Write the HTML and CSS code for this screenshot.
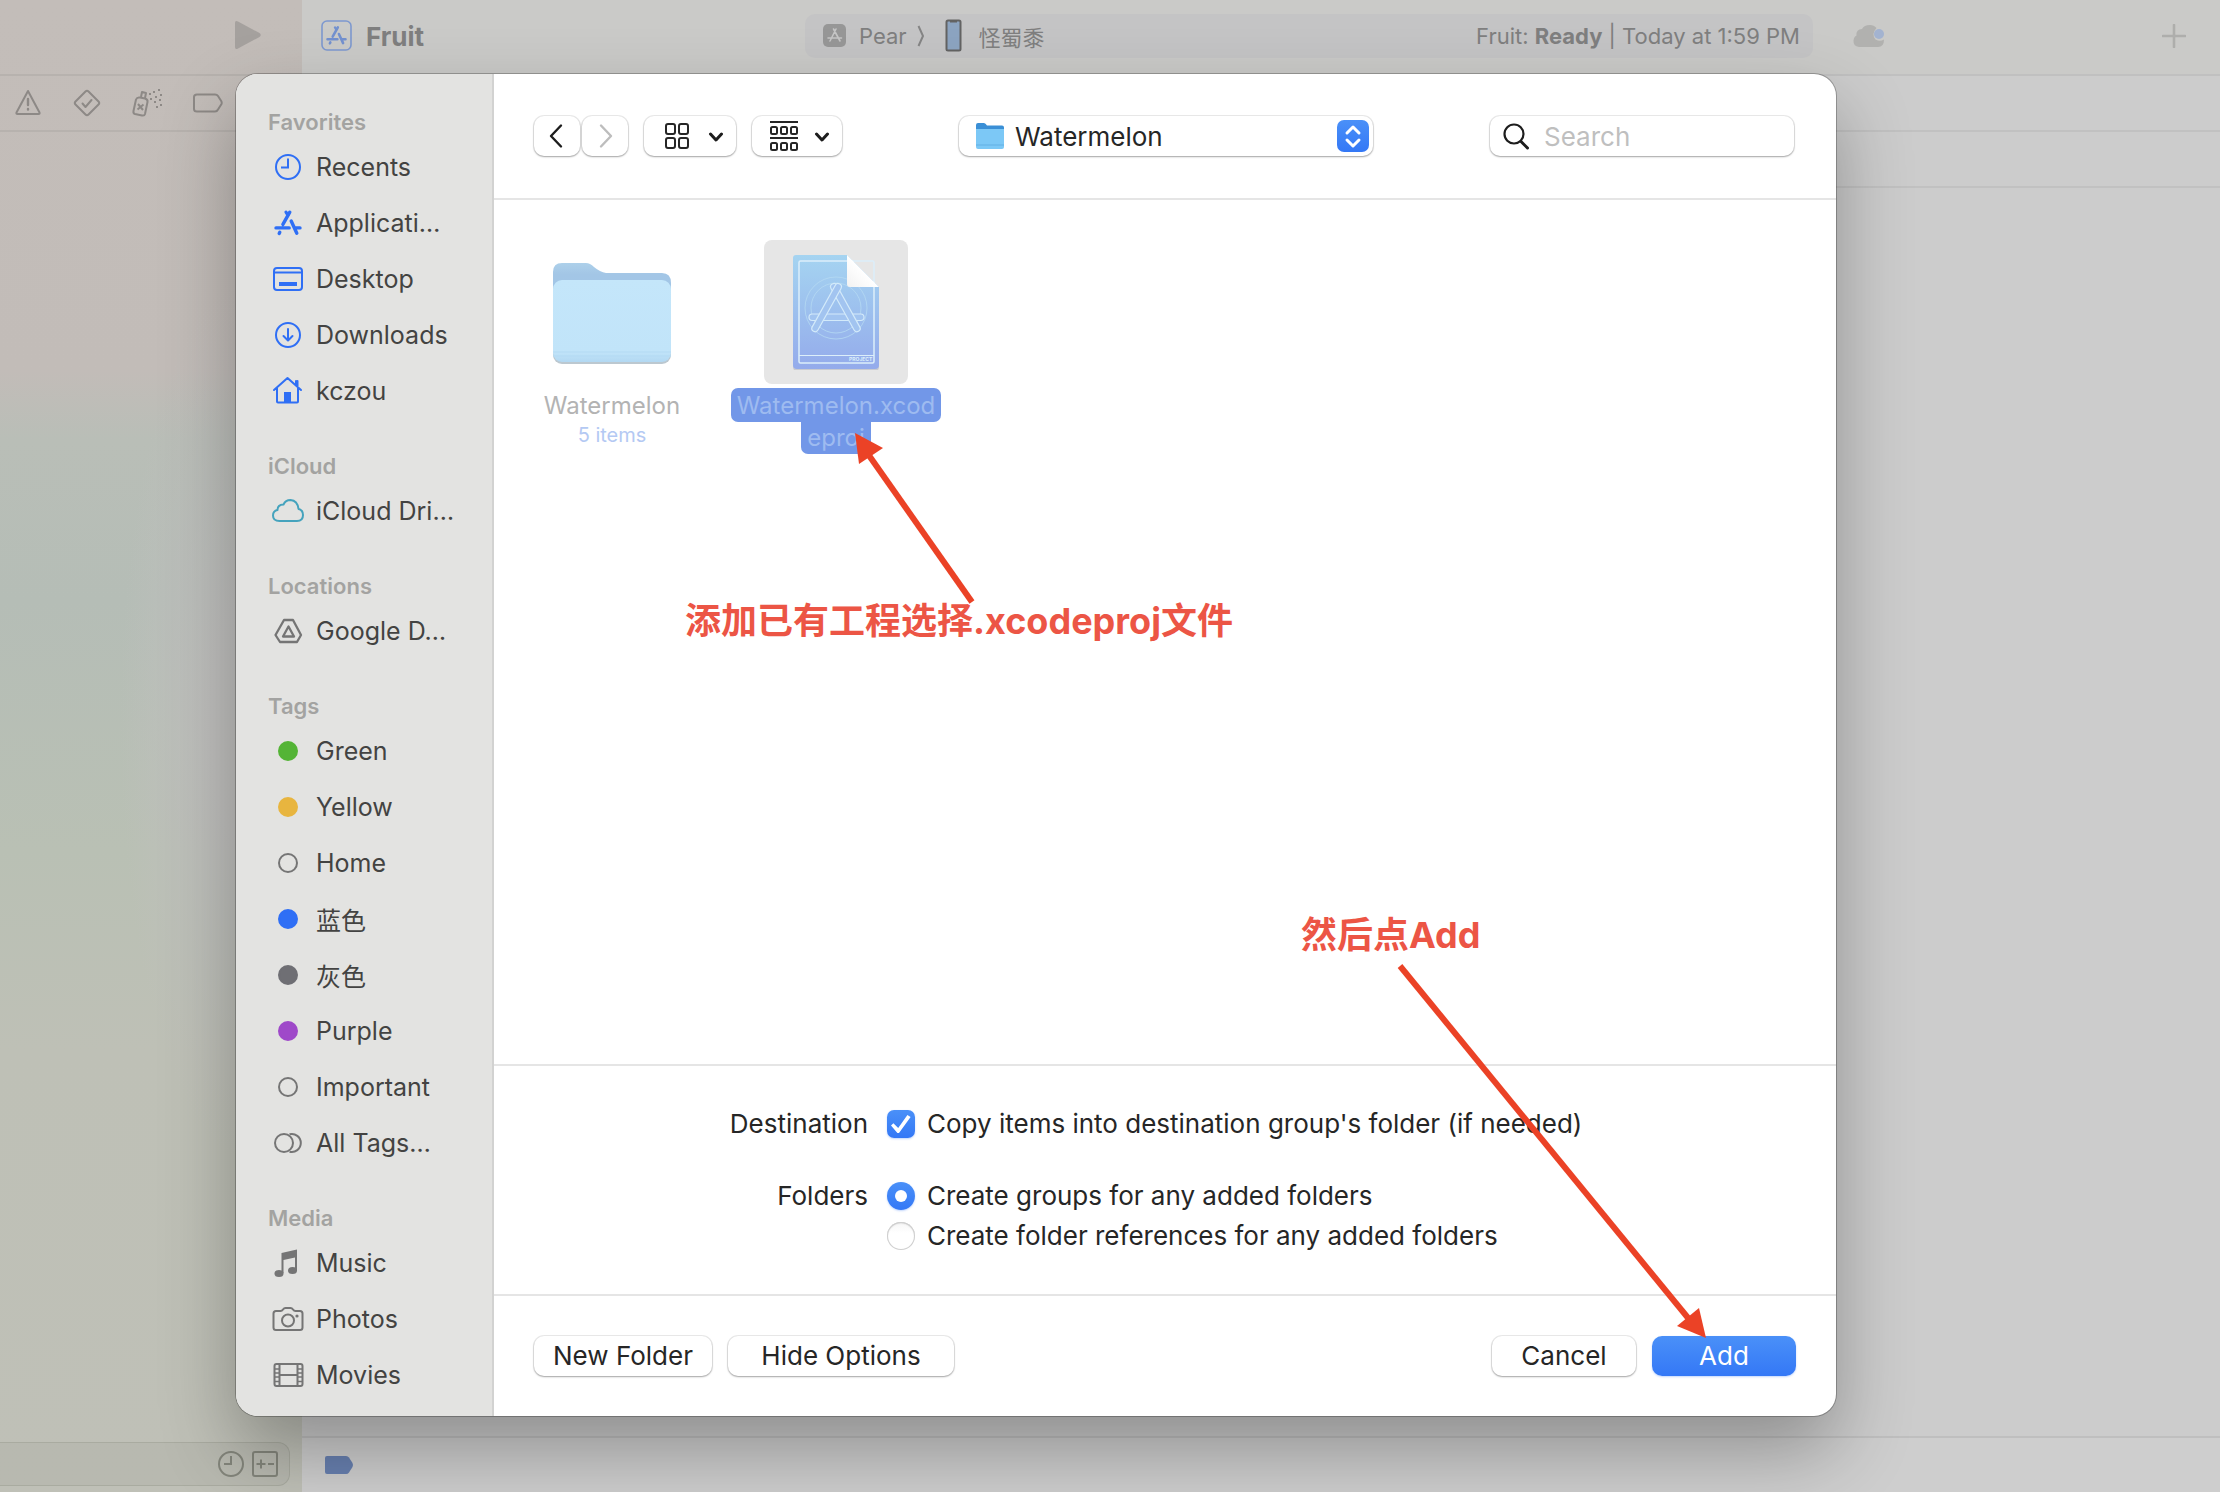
FILE: index.html
```html
<!DOCTYPE html>
<html lang="en">
<head>
<meta charset="utf-8">
<title>Fruit</title>
<link rel="stylesheet" href="styles.css">
</head>
<body>
<svg class="defs" aria-hidden="true">
  <defs>
    <symbol id="appstore" viewBox="0 0 28 28">
      <g fill="none" stroke="currentColor" stroke-linecap="round">
        <path stroke-width="3.4" d="M15.8 3.2 8.9 15.4M17.2 12 22.8 24.2M2 18.9H15.2M21.2 18.9H26M5.8 23.2 5.2 24.4"/>
        <path stroke-width="3.2" d="M12 3.2 13.8 6"/>
      </g>
    </symbol>
    <linearGradient id="folderBack" x1="0" y1="0" x2="0" y2="1"><stop offset="0" stop-color="#add0ea"/><stop offset=".2" stop-color="#a3c6e6"/><stop offset="1" stop-color="#9fc6e8"/></linearGradient>
    <linearGradient id="folderFront" x1="0" y1="0" x2="0" y2="1"><stop offset="0" stop-color="#c4e6fa"/><stop offset=".88" stop-color="#c1e4f9"/><stop offset="1" stop-color="#b2d8f2"/></linearGradient>
    <linearGradient id="docFill" x1="0" y1="0" x2="0" y2="1"><stop offset="0" stop-color="#a5d4f1"/><stop offset="1" stop-color="#94abeb"/></linearGradient>
    <linearGradient id="curlFill" x1="0" y1="1" x2="1" y2="0"><stop offset="0" stop-color="#f2f2f2"/><stop offset=".5" stop-color="#fff"/></linearGradient>
  </defs>
</svg>

<div class="workspace">
  <aside class="navigator">
    <div class="nav-top">
      <svg class="play" width="28" height="32" viewBox="0 0 28 32"><path d="M1 4Q1 1 4 2.500L25.500 14Q28 16 25.500 18L4 29.500Q1 31 1 28Z" fill="#a5a19e"/></svg>
    </div>
    <div class="nav-tabs">
      <svg width="30" height="30" viewBox="0 0 30 30" fill="none" stroke="#8d8986" stroke-width="2" stroke-linejoin="round" stroke-linecap="round"><path d="M15 3 26.500 24.500Q27 26 25.500 26H4.500Q3 26 3.500 24.500Z"/><path stroke-width="2.400" d="M15 11V17M15 21V21.500"/></svg>
      <svg width="30" height="30" viewBox="0 0 30 30" fill="none" stroke="#8d8986" stroke-width="2" stroke-linejoin="round" stroke-linecap="round"><path d="M13.500 3.500Q15 2 16.500 3.500L26.500 13.500Q28 15 26.500 16.500L16.500 26.500Q15 28 13.500 26.500L3.500 16.500Q2 15 3.500 13.500Z"/><path d="M10.500 15.500 13.500 19 19.500 12"/></svg>
      <svg width="32" height="30" viewBox="0 0 32 30" fill="none" stroke="#8d8986" stroke-width="2" stroke-linejoin="round"><path d="M5 11.500Q6 9 9 9.500L14 10.500Q17 11.500 16.500 14L14 26Q13.500 28 11 27.500L4 26Q2 25.500 2.500 23Z"/><path d="M10 9 11 4 15 5 14 10M7 16 12 22M12.500 16.500 6.500 21.500"/><path stroke="none" fill="#8d8986" d="M18 5h2v2h-2zM22 3h2v2h-2zM27 1h2v2h-2zM19 10h2v2h-2zM24 8h2v2h-2zM29 6h2v2h-2zM23 13h2v2h-2zM28 11h2v2h-2zM25 18h2v2h-2zM29 16h2v2h-2z"/></svg>
      <svg width="32" height="30" viewBox="0 0 32 30" fill="none" stroke="#8d8986" stroke-width="2" stroke-linejoin="round"><path d="M5 6.500H23Q25 6.500 26 8L29.500 13.500Q30 15 29.500 16L26 21.500Q25 23.500 23 23.500H5Q2 23.500 2 21V9Q2 6.500 5 6.500Z"/></svg>
    </div>
    <div class="nav-body"></div>
    <div class="nav-filter">
      <div class="filter-field">
        <svg width="28" height="28" viewBox="0 0 28 28" fill="none" stroke="#83857b" stroke-width="2"><circle cx="14" cy="14" r="12"/><path d="M14 6V14H7"/></svg>
        <svg width="28" height="28" viewBox="0 0 28 28" fill="none" stroke="#83857b" stroke-width="2"><rect x="2" y="2" width="24" height="24" rx="2"/><path d="M5.500 14H14.500M10 9.500V18.500M17 14H23"/></svg>
      </div>
    </div>
  </aside>

  <main class="editor">
    <header class="titlebar">
      <div class="project">
        <svg width="32" height="32" viewBox="0 0 32 32"><rect x="1" y="1" width="29" height="29" rx="5" fill="none" stroke="#7d98cf" stroke-width="1.600"/><use href="#appstore" x="5" y="5" width="21" height="21" color="#7391cf"/></svg>
        <span>Fruit</span>
      </div>
      <div class="status">
        <svg width="24" height="24" viewBox="0 0 24 24"><rect width="23" height="23" rx="5" fill="#979797"/><g fill="none" stroke="#c6c6c6" stroke-width="1.600" stroke-linecap="round"><path d="M13 5 7 17M10.500 5 17 17M5 14H18.500"/></g></svg>
        <span>Pear</span>
        <svg class="crumb" width="8" height="24" viewBox="0 0 8 24"><path d="M1.500 2 6 12 1.500 22" fill="none" stroke="#858585" stroke-width="2"/></svg>
        <svg class="phone" width="18" height="34" viewBox="0 0 18 34"><rect x="1.500" y="1.500" width="14" height="30" rx="1.500" fill="#8ca4c1" stroke="#636363" stroke-width="2"/><path d="M5 2.500H12" stroke="#636363" stroke-width="2"/></svg>
        <span>怪蜀黍</span>
        <span class="status-text">Fruit: <b>Ready</b> | Today at 1:59 PM</span>
      </div>
      <div class="titlebar-end">
        <svg width="32" height="24" viewBox="0 0 32 24"><path d="M6 23Q0 22 .500 16.500Q1 12.500 3.500 11.500Q3 5 9 5Q11 1 17 1Q21 1 23.500 4Q18 10 22.500 15.500Q27 18 31 15.500Q31 23 25 23Z" fill="#b1b1af"/><circle cx="26" cy="10" r="5" fill="#a3b3d0"/></svg>
        <svg width="24" height="24" viewBox="0 0 24 24"><path d="M1 12H23M12 1V23" stroke="#aeaeac" stroke-width="2.600" stroke-linecap="round"/></svg>
      </div>
    </header>
    <div class="tabstrip"></div>
    <div class="tabstrip"></div>
    <div class="canvas"></div>
    <footer class="debugbar">
      <svg width="30" height="20" viewBox="0 0 30 20"><path d="M3 1H22Q24 1 25 2.500L28.500 8Q29.500 10 28.500 12L25 17.500Q24 19 22 19H3Q1 19 1 17V3Q1 1 3 1Z" fill="#6880b0"/></svg>
    </footer>
  </main>
</div>

<section class="sheet" role="dialog" aria-label="Add files">
  <nav class="places">
    <h2>Favorites</h2>
    <ul>
      <li><a href="#recents"><svg viewBox="0 0 32 32"><circle cx="16" cy="16" r="12" fill="none" stroke="#2f6ff5" stroke-width="2"/><path d="M16 7.500V16.500H9" fill="none" stroke="#2f6ff5" stroke-width="2"/></svg>Recents</a></li>
      <li><a href="#applications"><svg viewBox="0 0 32 32"><use href="#appstore" x="2" y="2" width="28" height="28" color="#2f6ff5"/></svg>Applicati…</a></li>
      <li><a href="#desktop"><svg viewBox="0 0 32 32"><g fill="none" stroke="#2f6ff5" stroke-width="2"><rect x="2" y="5" width="28" height="22" rx="3"/><path d="M2 9.500H30"/></g><rect x="7" y="19" width="18" height="4" fill="#2f6ff5"/></svg>Desktop</a></li>
      <li><a href="#downloads"><svg viewBox="0 0 32 32"><g fill="none" stroke="#2f6ff5" stroke-width="2" stroke-linecap="round" stroke-linejoin="round"><circle cx="16" cy="16" r="12"/><path d="M16 10V21M11.500 17 16 21.500 20.500 17"/></g></svg>Downloads</a></li>
      <li><a href="#kczou"><svg viewBox="0 0 32 32"><g fill="none" stroke="#2f6ff5" stroke-width="2" stroke-linejoin="round" stroke-linecap="round"><path d="M2 15 15.500 3 29 15M5 13V26.500Q5 27.500 6 27.500H25Q26 27.500 26 26.500V13M24 6V10M25.500 6V11"/></g><path d="M12 27V17H19V27Z" fill="#2f6ff5"/></svg>kczou</a></li>
    </ul>
    <h2>iCloud</h2>
    <ul>
      <li><a href="#icloud"><svg viewBox="0 0 32 32"><path d="M7.500 26Q1 26 1 20.500Q1 16 5.500 15Q5.500 9.500 11.500 9.500Q13.500 5 18.500 5Q25.500 5.500 26.500 14Q31 15 31 20Q31 26 25 26Z" fill="none" stroke="#45a3bd" stroke-width="2" stroke-linejoin="round"/></svg>iCloud Dri…</a></li>
    </ul>
    <h2>Locations</h2>
    <ul>
      <li><a href="#google"><svg viewBox="0 0 32 32"><g fill="none" stroke="#757575" stroke-width="2.300" stroke-linejoin="round"><path d="M12 5H21L29 20 25 27H8L3.500 20Z"/><path d="M16.500 11.500 22 21.500H11Z"/></g></svg>Google D…</a></li>
    </ul>
    <h2>Tags</h2>
    <ul>
      <li><a href="#green"><i class="dot green"></i>Green</a></li>
      <li><a href="#yellow"><i class="dot yellow"></i>Yellow</a></li>
      <li><a href="#home"><i class="dot"></i>Home</a></li>
      <li><a href="#blue"><i class="dot blue"></i>蓝色</a></li>
      <li><a href="#gray"><i class="dot gray"></i>灰色</a></li>
      <li><a href="#purple"><i class="dot purple"></i>Purple</a></li>
      <li><a href="#important"><i class="dot"></i>Important</a></li>
      <li><a href="#alltags"><svg viewBox="0 0 32 32"><g fill="none" stroke="#757575" stroke-width="2"><circle cx="12" cy="16" r="9"/><path d="M17.500 7.300A9 9 0 1 1 17.500 24.700"/></g></svg>All Tags…</a></li>
    </ul>
    <h2>Media</h2>
    <ul>
      <li><a href="#music"><svg viewBox="0 0 32 32"><g fill="#757575"><path d="M9.500 6 25 2.500V24H23V10.500L11.500 13V26H9.500Z"/><ellipse cx="7" cy="26.500" rx="4.500" ry="3.600"/><ellipse cx="20.500" cy="23.500" rx="4.500" ry="3.600"/></g></svg>Music</a></li>
      <li><a href="#photos"><svg viewBox="0 0 32 32"><g fill="none" stroke="#757575" stroke-width="2" stroke-linejoin="round"><path d="M4 8H8.500Q10 8 11 6.500Q12 5 13.500 5H18.500Q20 5 21 6.500Q22 8 23.500 8H28Q30.500 8 30.500 10.500V24.500Q30.500 27 28 27H4Q1.500 27 1.500 24.500V10.500Q1.500 8 4 8Z"/><circle cx="16" cy="17.500" r="6"/></g><circle cx="25" cy="13" r="1.600" fill="#757575"/></svg>Photos</a></li>
      <li><a href="#movies"><svg viewBox="0 0 32 32"><g fill="none" stroke="#757575" stroke-width="2"><rect x="2.500" y="5" width="28" height="22" rx="2"/><path d="M7.500 5V27M25.500 5V27M7.500 16H25.500"/><path stroke-width="1.600" d="M2.500 10H7.500M2.500 14H7.500M2.500 18H7.500M2.500 22.500H7.500M25.500 10H30.500M25.500 14H30.500M25.500 18H30.500M25.500 22.500H30.500"/></g></svg>Movies</a></li>
    </ul>
  </nav>

  <div class="panel">
    <div class="toolbar">
      <div class="tools">
        <div class="history">
          <button class="btn square" aria-label="Back"><svg width="24" height="28" viewBox="0 0 24 28"><path d="M16 3.500 6 14 16 24.500" fill="none" stroke="#1d1d1d" stroke-width="2.400" stroke-linecap="round" stroke-linejoin="round"/></svg></button>
          <button class="btn square" aria-label="Forward"><svg width="24" height="28" viewBox="0 0 24 28"><path d="M8 3.500 18 14 8 24.500" fill="none" stroke="#bdbdbd" stroke-width="2.400" stroke-linecap="round" stroke-linejoin="round"/></svg></button>
        </div>
        <button class="btn view" aria-label="Icon view">
          <svg width="26" height="28" viewBox="0 0 26 28" fill="none" stroke="#262626" stroke-width="2"><rect x="2" y="2" width="9" height="10" rx="2"/><rect x="15" y="2" width="9" height="10" rx="2"/><rect x="2" y="16" width="9" height="10" rx="2"/><rect x="15" y="16" width="9" height="10" rx="2"/></svg>
          <svg width="16" height="12" viewBox="0 0 16 12"><path d="M2.500 4 8 10 13.500 4" fill="none" stroke="#1d1d1d" stroke-width="3" stroke-linecap="round" stroke-linejoin="round"/></svg>
        </button>
        <button class="btn view group" aria-label="Group by">
          <svg width="28" height="32" viewBox="0 0 28 32" fill="none" stroke="#262626" stroke-width="2"><path d="M0 2H28M0 18H28"/><rect x="1" y="7" width="6" height="7" rx="1.500"/><rect x="11" y="7" width="6" height="7" rx="1.500"/><rect x="21" y="7" width="6" height="7" rx="1.500"/><rect x="1" y="23" width="6" height="7" rx="1.500"/><rect x="11" y="23" width="6" height="7" rx="1.500"/><rect x="21" y="23" width="6" height="7" rx="1.500"/></svg>
          <svg width="16" height="12" viewBox="0 0 16 12"><path d="M2.500 4 8 10 13.500 4" fill="none" stroke="#1d1d1d" stroke-width="3" stroke-linecap="round" stroke-linejoin="round"/></svg>
        </button>
      </div>
      <div class="location">
        <svg width="30" height="30" viewBox="0 0 30 30"><path d="M1 4Q1 2 3 2H9Q10.500 2 12 4.500H27Q29 4.500 29 6.500V12H1Z" fill="#3a8fd6"/><path d="M1 8H29V26Q29 28 27 28H3Q1 28 1 26Z" fill="#7cc8f6"/><path d="M1 24H29" stroke="#63b0e4" stroke-width="1"/></svg>
        <select aria-label="Folder"><option>Watermelon</option></select>
        <svg class="stepper" width="32" height="32" viewBox="0 0 32 32"><path d="M10 13 16 7 22 13M10 20 16 26 22 20" fill="none" stroke="#fff" stroke-width="3" stroke-linecap="round" stroke-linejoin="round"/></svg>
      </div>
      <div class="search">
        <svg width="28" height="28" viewBox="0 0 28 28" fill="none" stroke="#1d1d1d" stroke-linecap="round"><circle cx="12" cy="12" r="9.500" stroke-width="2.200"/><path stroke-width="3" d="M19 19.500 25.500 26"/></svg>
        <input type="search" placeholder="Search" aria-label="Search">
      </div>
    </div>

    <div class="files">
      <figure class="item">
        <div class="tile">
          <svg width="124" height="104" viewBox="0 0 124 104"><path d="M3 12Q3 3 12 3H36Q40 3 44 7Q50 12 56 13H112Q121 13 121 23V60H3Z" fill="url(#folderBack)"/><rect x="3" y="22" width="118" height="82" rx="9" fill="#bcc8d0"/><rect x="3" y="20" width="118" height="82" rx="9" fill="url(#folderFront)"/><path d="M3 92H121M3 96H121" stroke="#b3daf3" stroke-width="1"/></svg>
        </div>
        <figcaption><span class="name">Watermelon</span><span class="count">5 items</span></figcaption>
      </figure>
      <figure class="item selected">
        <div class="tile">
          <svg width="88" height="116" viewBox="0 0 88 116">
            <path d="M4 3H55L87 35V113Q87 117 83 117H5Q1 117 1 113V6Q1 3 4 3Z" fill="#c9cbd0"/>
            <path d="M4 1H55L87 33V111Q87 115 83 115H5Q1 115 1 111V4Q1 1 4 1Z" fill="url(#docFill)"/>
            <rect x="7" y="7" width="75" height="102" rx="1.500" fill="none" stroke="#dceefa" stroke-width="1.500"/>
            <path d="M7 101.500H82" stroke="#dceefa" stroke-width="1.200"/>
            <g fill="none" stroke="#b5d9f3" stroke-width=".8"><circle cx="44" cy="54" r="31"/><circle cx="44" cy="54" r="25"/></g>
            <g fill="#a2c4f0" stroke="#d3eafa" stroke-width="1.200">
              <rect x="17" y="60" width="55" height="6.500" rx="3.200"/>
              <rect x="40.500" y="27" width="6.500" height="54" rx="3.200" transform="rotate(-29 44 28) translate(-4 1)"/>
              <rect x="41" y="27" width="6.500" height="54" rx="3.200" transform="rotate(29 44 28) translate(4 1)"/>
            </g>
            <text x="57" y="107" class="doc-kind">PROJECT</text>
            <path d="M55 1 87 33H58Q55 33 55 30Z" fill="url(#curlFill)"/>
          </svg>
        </div>
        <figcaption><span class="name">Watermelon.xcod</span><span class="name tail">eproj</span></figcaption>
      </figure>
    </div>

    <div class="options">
      <span class="caption">Destination</span>
      <label><input type="checkbox" checked>Copy items into destination group's folder (if needed)</label>
      <span class="caption row-gap">Folders</span>
      <label class="row-gap"><input type="radio" name="folders" checked>Create groups for any added folders</label>
      <label class="second"><input type="radio" name="folders">Create folder references for any added folders</label>
    </div>

    <div class="actions">
      <button class="btn new-folder">New Folder</button>
      <button class="btn hide-options">Hide Options</button>
      <button class="btn cancel">Cancel</button>
      <button class="btn add">Add</button>
    </div>
  </div>

  <p class="note note-file">添加已有工程选择.xcodeproj文件</p>
  <p class="note note-add">然后点Add</p>
  <svg class="arrow arrow-file" width="126" height="178" viewBox="0 0 126 178"><path d="M17 25 121 173" stroke="#eb4226" stroke-width="6"/><path d="M4 4 32 19 8 35Z" fill="#eb4226"/></svg>
  <svg class="arrow arrow-add" width="320" height="384" viewBox="0 0 320 384"><path d="M4 4 297 362" stroke="#eb4226" stroke-width="6"/><path d="M310 376 303 346 281 364Z" fill="#eb4226"/></svg>
</section>
</body>
</html>
```
FILE: styles.css
```css
* { box-sizing: border-box; }

body {
  margin: 0;
  min-height: 100vh;
  position: relative;
  overflow: hidden;
  background: #cccccc;
  color: #262626;
  font-family: Inter, "Noto Sans CJK SC", sans-serif;
  font-size: 26px;
}

.defs { position: absolute; width: 0; height: 0; }
svg { display: block; flex: none; }

/* Project window behind the sheet */
.workspace {
  display: grid;
  grid-template-columns: 302px 1fr;
  min-height: 100vh;
}

.navigator {
  display: flex;
  flex-direction: column;
  background:
    radial-gradient(ellipse 130px 440px at 250px 720px, rgba(193, 192, 191, .9) 30%, rgba(193, 192, 191, 0)),
    linear-gradient(180deg, #c3bdb9 0, #c2bcb8 370px, #b9beb7 440px, #b5bdb6 600px, #b9c0b4 850px, #bec0b6 1050px, #bfc0b7 100%);
}
.nav-top {
  height: 76px;
  display: flex;
  align-items: center;
  justify-content: flex-end;
  padding: 0 40px 4px 0;
  border-bottom: 2px solid #b7b2ae;
}
.nav-tabs {
  height: 56px;
  display: flex;
  align-items: center;
  gap: 29px;
  padding-left: 13px;
  border-bottom: 2px solid #b7b2ae;
}
.nav-body { flex: 1; }
.nav-filter { padding: 0 12px 6px 0; }
.filter-field {
  height: 44px;
  display: flex;
  align-items: center;
  justify-content: flex-end;
  gap: 6px;
  padding-right: 10px;
  border: 1px solid #a9aba0;
  border-left: 0;
  border-radius: 0 12px 12px 0;
  background: rgba(140, 145, 135, .14);
}

.editor { display: flex; flex-direction: column; }
.titlebar {
  height: 76px;
  display: flex;
  align-items: center;
  padding-bottom: 2px;
  border-bottom: 2px solid #c0c0c0;
  background: #cacac8;
  color: #7f7f7f;
}
.project {
  width: 503px;
  display: flex;
  align-items: center;
  gap: 13px;
  padding-left: 19px;
  font-weight: 700;
}
.status {
  flex: 1;
  height: 44px;
  display: flex;
  align-items: center;
  padding: 0 13px 0 18px;
  border-radius: 10px;
  background: #c4c4c5;
  font-size: 22px;
}
.status > svg:first-child { margin-right: 12px; }
.crumb { margin: 0 20px 0 10px; }
.phone { margin-right: 16px; }
.status-text { margin-left: auto; }
.titlebar-end {
  width: 407px;
  display: flex;
  justify-content: space-between;
  padding: 0 34px 0 40px;
}
.tabstrip { height: 56px; border-bottom: 2px solid #c1c1c1; }
.canvas { flex: 1; }
.debugbar {
  height: 56px;
  display: flex;
  align-items: center;
  padding: 0 22px;
  border-top: 2px solid #bfbfbf;
  background: #cecece;
}

/* Open sheet */
.sheet {
  position: absolute;
  top: 74px;
  left: 236px;
  right: 384px;
  display: grid;
  grid-template-columns: 258px 1fr;
  border-radius: 22px;
  background: #fff;
  box-shadow: 0 0 0 1px rgba(0, 0, 0, .25), 0 34px 76px rgba(0, 0, 0, .3);
}

.places {
  padding: 31px 0 13px 32px;
  border-right: 2px solid #d2d2d1;
  border-radius: 22px 0 0 22px;
  background: #e3e3e1;
}
.places h2 {
  margin: 30px 0 0;
  font-size: 22px;
  line-height: 34px;
  font-weight: 600;
  color: #a3a3a1;
}
.places h2:first-child { margin-top: 0; }
.places ul { margin: 0; padding: 0; list-style: none; }
.places a {
  height: 56px;
  display: flex;
  align-items: center;
  gap: 12px;
  padding-left: 4px;
  color: #434342;
  font-size: 25px;
  text-decoration: none;
  white-space: nowrap;
}
.places a svg { width: 32px; height: 32px; }
.dot {
  width: 20px;
  height: 20px;
  margin: 0 6px;
  border: 2px solid #757575;
  border-radius: 50%;
}
.green { background: #54b436; border-color: #54b436; }
.yellow { background: #e8b53f; border-color: #e8b53f; }
.blue { background: #2f6ff5; border-color: #2f6ff5; }
.gray { background: #6f6f74; border-color: #6f6f74; }
.purple { background: #9f49c9; border-color: #9f49c9; }

.panel { display: flex; flex-direction: column; }

.btn {
  height: 40px;
  display: flex;
  align-items: center;
  justify-content: center;
  padding: 0;
  border: 0;
  border-radius: 10px;
  background: #fff;
  color: #262626;
  font: inherit;
  box-shadow: 0 0 0 1px rgba(0, 0, 0, .08), 0 1px 2px rgba(0, 0, 0, .3);
}

.toolbar {
  height: 126px;
  display: flex;
  align-items: center;
  justify-content: space-between;
  padding: 0 42px 0 40px;
  border-bottom: 2px solid #e5e5e5;
}
.tools { display: flex; gap: 16px; }
.history { display: flex; gap: 2px; }
.square { width: 46px; }
.view { width: 92px; gap: 18px; padding-left: 8px; }
.group { width: 90px; gap: 16px; padding-left: 6px; }
.location, .search {
  height: 40px;
  display: flex;
  align-items: center;
  border-radius: 10px;
  background: #fff;
  box-shadow: 0 0 0 1px rgba(0, 0, 0, .08), 0 1px 2px rgba(0, 0, 0, .3);
}
.location { width: 414px; padding: 0 4px 0 16px; gap: 10px; }
.location select {
  flex: 1;
  appearance: none;
  padding: 0;
  border: 0;
  background: none;
  color: inherit;
  font: inherit;
}
.stepper { border-radius: 7px; background: linear-gradient(#4a90f8, #3478f6); }
.search { width: 304px; padding: 0 12px; gap: 14px; }
.search input {
  flex: 1;
  min-width: 0;
  padding: 0;
  border: 0;
  outline: 0;
  background: none;
  font: inherit;
}
.search input::placeholder { color: #bfbfbf; }

.files {
  height: 864px;
  display: flex;
  align-items: flex-start;
  padding: 40px 6px;
}
.item {
  width: 224px;
  margin: 0;
  display: flex;
  flex-direction: column;
  align-items: center;
  gap: 4px;
}
.tile {
  width: 144px;
  height: 144px;
  display: flex;
  align-items: center;
  justify-content: center;
  border-radius: 8px;
}
.selected .tile { background: #e6e6e6; }
.item figcaption { display: flex; flex-direction: column; align-items: center; }
.name {
  padding: 1px 6px 0;
  border-radius: 7px;
  font-size: 24px;
  line-height: 33px;
  color: #b3b3b3;
}
.count { font-size: 20px; line-height: 26px; color: #b4c9f3; }
.selected .name { background: #7297e8; color: #9ebbf0; }
.selected .tail { padding-top: 0; line-height: 32px; border-radius: 0 0 7px 7px; }
.doc-kind { font-size: 5px; font-weight: 700; fill: #dceefa; }

.options {
  display: grid;
  grid-template-columns: 374px 1fr;
  column-gap: 19px;
  padding: 38px 0;
  border-top: 2px solid #e5e5e5;
  border-bottom: 2px solid #e5e5e5;
  line-height: 40px;
}
.caption { text-align: right; }
.row-gap { margin-top: 32px; }
.options label { display: flex; align-items: center; gap: 12px; }
.second { grid-column: 2; }
.options input {
  appearance: none;
  width: 28px;
  height: 28px;
  margin: 0;
  border-radius: 50%;
  background: linear-gradient(#f6f6f6, #fff 40%);
  box-shadow: inset 0 0 0 1px #cfcfcf, inset 0 1px 2px rgba(0, 0, 0, .2);
  display: grid;
  place-items: center;
}
.options input:checked {
  background: linear-gradient(#4a90f8, #3478f6);
  box-shadow: 0 1px 2px rgba(52, 120, 246, .3);
}
.options input[type="checkbox"] { border-radius: 7px; }
.options input[type="radio"]:checked::before {
  content: "";
  width: 12px;
  height: 12px;
  border-radius: 50%;
  background: #fff;
}
.options input[type="checkbox"]:checked::before {
  content: "";
  width: 20px;
  height: 20px;
  background: #fff;
  clip-path: polygon(0 57%, 12% 46%, 36% 70%, 82% 5%, 98% 15%, 40% 95%, 32% 95%);
}

.actions {
  height: 120px;
  display: flex;
  align-items: center;
  gap: 16px;
  padding: 0 40px;
}
.actions .btn { padding-bottom: 2px; }
.new-folder { width: 178px; }
.hide-options { width: 226px; }
.cancel, .add { width: 144px; }
.cancel { margin-left: auto; }
.add {
  background: linear-gradient(#4a90f8, #3478f6);
  color: #fff;
  box-shadow: 0 1px 2px rgba(52, 120, 246, .3);
}

/* Annotations drawn over the sheet */
.note {
  position: absolute;
  margin: 0;
  font-size: 36px;
  line-height: 44px;
  font-weight: 700;
  color: #ec5545;
  white-space: nowrap;
}
.note-file { left: 449px; top: 525px; }
.note-add { left: 1065px; top: 839px; }
.arrow { position: absolute; pointer-events: none; }
.arrow-file { left: 615px; top: 355px; }
.arrow-add { left: 1160px; top: 888px; }
```
